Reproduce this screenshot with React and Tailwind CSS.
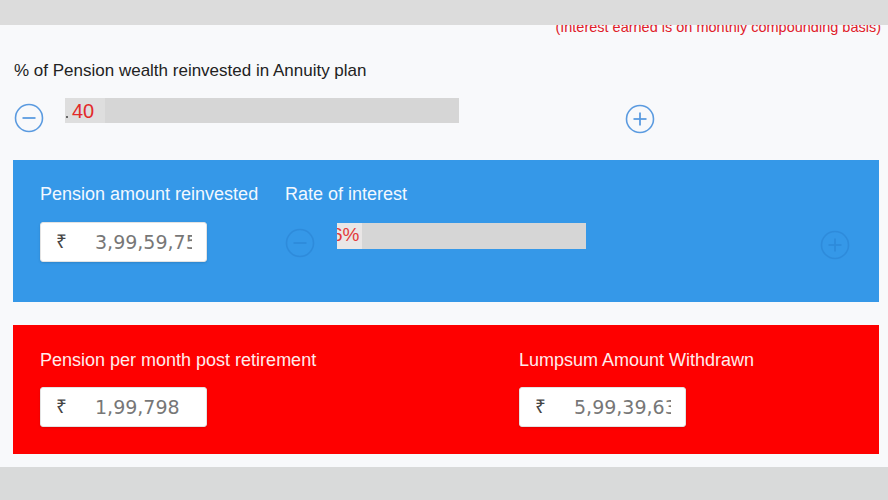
const CircleBtn = ({ sign, faded }) => (
    <svg
        width="30"
        height="30"
        viewBox="0 0 30 30"
        fill="none"
        className={faded ? 'opacity-30' : ''}
    >
        <circle cx="15" cy="15" r="13.5" stroke={faded ? '#1f6fbf' : '#5b9be0'} strokeWidth="1.6" />
        <line x1="8.5" y1="15" x2="21.5" y2="15" stroke={faded ? '#1f6fbf' : '#5b9be0'} strokeWidth="1.8" />
        {sign === 'plus' && (
            <line x1="15" y1="8.5" x2="15" y2="21.5" stroke={faded ? '#1f6fbf' : '#5b9be0'} strokeWidth="1.8" />
        )}
    </svg>
);

const AmountBox = ({ value }) => (
    <div className="w-[167px] h-[40px] bg-white rounded-[3px] border border-[#e3e3e3] flex items-center shadow-sm">
        <span className="pl-[15px] w-[54px] shrink-0 text-[19px] text-[#444]">₹</span>
        <span className="w-[97px] shrink-0 min-w-0 overflow-hidden whitespace-nowrap text-[19px] text-[#777] font-['DejaVu_Sans',sans-serif]">
            {value}
        </span>
    </div>
);

const App = () => {
    return (
        <div className="w-full h-[500px] bg-[#d9dada] flex flex-col font-['Liberation_Sans',Arial,sans-serif]">
            <div className="h-[25px] bg-[#dcdcdc] relative z-10" />

            <div className="h-[442px] bg-[#f8f9fb] overflow-hidden flex flex-col">
                <p className="-mt-[7px] pr-[7px] text-right text-[14.5px] leading-[18px] text-[#e0202a]">
                    (Interest earned is on monthly compounding basis)
                </p>

                <p className="mt-[24px] pl-[14px] text-[17px] leading-[22px] text-[#222]">
                    % of Pension wealth reinvested in Annuity plan
                </p>

                {/* slider row */}
                <div className="mt-[21px] flex items-start h-[30px] pl-[14px]">
                    <CircleBtn sign="minus" />
                    <div className="ml-[21px] w-[394px] h-[25px] -mt-[5px] bg-[#d6d6d6] flex items-center">
                        <div className="w-[40px] h-full bg-[#dedede] flex items-center">
                            <span className="ml-[1px] mt-[12px] w-[2px] h-[2px] bg-[#666]" />
                            <span className="ml-[4px] text-[20px] text-[#e22a2a]">40</span>
                        </div>
                    </div>
                    <div className="ml-[166px] mt-[1px]">
                        <CircleBtn sign="plus" />
                    </div>
                </div>

                {/* blue block */}
                <div className="mt-[27px] mx-[13px] w-[866px] h-[142px] bg-[#3598e8] pl-[27px] pt-[23px]">
                    <div className="grid grid-cols-[245px_1fr]">
                        <span className="text-[18px] leading-[22px] text-[#f2f8ff]">Pension amount reinvested</span>
                        <span className="text-[18px] leading-[22px] text-[#f2f8ff]">Rate of interest</span>
                    </div>
                    <div className="mt-[17px] grid grid-cols-[245px_1fr]">
                        <AmountBox value="3,99,59,752" />
                        <div className="flex items-center h-[40px] pr-[29px]">
                            <div className="mt-[1px]">
                                <CircleBtn sign="minus" faded />
                            </div>
                            <div className="ml-[22px] w-[249px] h-[26px] -mt-[13px] bg-[#d6d6d6] overflow-hidden flex items-center">
                                <div className="w-[25px] h-full bg-[#e9e6e6] flex items-center overflow-hidden">
                                    <span className="-ml-[5px] text-[19px] text-[#e33a3a] whitespace-nowrap">6%</span>
                                </div>
                            </div>
                            <div className="ml-auto mt-[6px]">
                                <CircleBtn sign="plus" faded />
                            </div>
                        </div>
                    </div>
                </div>

                {/* red block */}
                <div className="mt-[23px] mx-[13px] w-[866px] h-[129px] bg-[#fe0000] pl-[27px] pt-[24px]">
                    <div className="grid grid-cols-[479px_1fr]">
                        <span className="text-[18px] leading-[22px] text-[#ffecec]">Pension per month post retirement</span>
                        <span className="text-[18px] leading-[22px] text-[#ffecec]">Lumpsum Amount Withdrawn</span>
                    </div>
                    <div className="mt-[16px] grid grid-cols-[479px_1fr]">
                        <AmountBox value="1,99,798" />
                        <AmountBox value="5,99,39,638" />
                    </div>
                </div>
            </div>
        </div>
    );
};

export default App;
